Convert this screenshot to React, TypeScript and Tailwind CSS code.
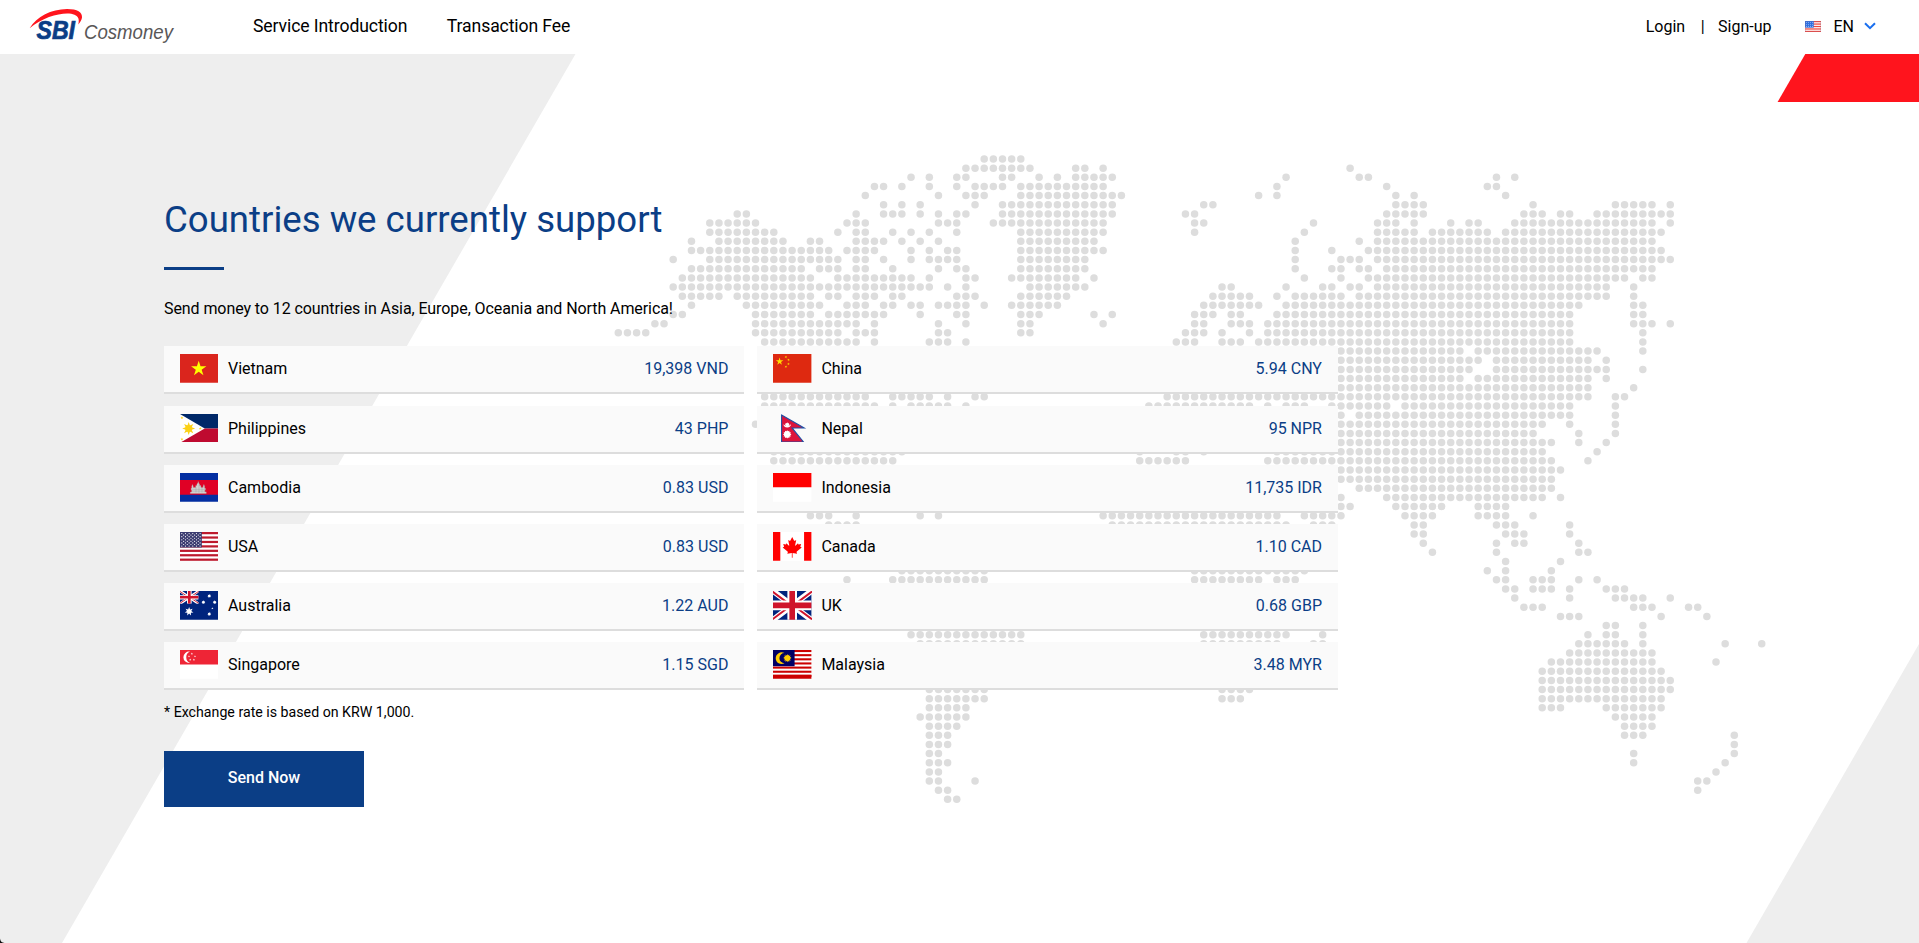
import type { ReactNode } from "react";

const COL = 9.1475;
const X0 = 618.3;
const Y0 = 159;

const MAP_ROWS: string[] = [
  "40-44",
  "38-45 50 51 53 80",
  "32 34 37 38 42 43 46 48 50-54 73 81 82 96 98",
  "28 29 31 34 37 39-42 44-53 72 84 95 96",
  "27 35 38-40 44-55 70 72 85 87 97",
  "29 31 33 39 42-54 64 65 85-88 100 109-113 115",
  "13 14 26 29-31 33 35 37 38 42-54 62 63 84-88 99-101 103 104 107-115",
  "10-15 25-27 35-37 41-53 63 64 76 83-85 87 91 93 94 98-113 115",
  "10-17 24 26 27 30 32 34 37 44-53 63 75 83-87 89-95 97-114",
  "8 11-18 21 22 26-29 31 33 35 44-52 74 81 83-113",
  "8-23 25-28 32 34 36 37 44-53 74 78 82-114",
  "6 10-24 26 27 29 32 34-37 44-51 74 79-81 83-115",
  "8-20 22-24 26 27 30 35 37 38 44-51 74 78 79 81 82 84-113",
  "7-21 24-32 34 38 39 43-50 52 75 79 82-110 112 113",
  "6-34 36 38 45-51 66 67 73 77 78 80 81 83-108 111",
  "7-11 13-21 23 24 26-28 30 31 37-39 44-49 65-69 72 74-79 81-108 111",
  "8 14-22 25-27 29 30 32 33 35-38 40 43-48 64-70 73-105 111 112",
  "6 7 15-21 23-29 33 37 38 44-46 52 54 63-65 67 68 72-104 111 112",
  "4 5 15-26 28 35 38 44 45 53 63 64 67-69 71-104 111-113 115",
  "0-3 15-24 26-28 35 36 44 45 62-64 66 69 71-104 112",
  "16-26 28 34-36 38 61-63 66-68 70-104 112",
  "79-92 94-107 112",
  "79-94 96-106 108",
  "79-93 96-108 112",
  "79-92 94-106 108",
  "79-106 111",
  "16-27 30-34 36 39 40 60-106 109 110",
  "16-28 30 32-36 38 58-69 71 73-75 78-84 86-104 109",
  "79 81-104 109",
  "15 79-101 104 109",
  "79-100 105 109",
  "79-102 105 108",
  "17-31 57 61 62 64 72-101 107",
  "17-30 57-62 71-102 106",
  "79-103",
  "79-102",
  "81-102",
  "79 84-101 103",
  "79 80 85-90 94-97",
  "21-23 26 33 35 53-72 75-79 86-89 94-97 100",
  "23-26 54-73 76-78 87 88 96-98 104",
  "87 88 97-99 104",
  "88 96 98 99 105",
  "89 96 105 106",
  "97 103",
  "31-40 63-75 95 97 102",
  "25 30-40 63-70 72-74 96 97 100-102 105 107",
  "97 98 100-102 104 108-110",
  "98 104 109-112 115",
  "99-101 111-113 117 118",
  "103-105 114 119",
  "108 109 112",
  "32-44 64-73 77 106 108 109 112",
  "33-44 64-72 76 77 105-110 112 121 125",
  "104-113",
  "102-113 120",
  "101-114",
  "101-115",
  "34-40 66-69 101-115",
  "34-40 66-68 101-114",
  "34-38 101-103 108-114",
  "33-38 109-113",
  "34-37 110-113",
  "34-36 110-112 122",
  "34-36 122",
  "34 35 111 122",
  "34-36 111 121",
  "34 35 120",
  "34 35 39 118 119",
  "35 36 118",
  "36 37",
];

const DOTS = MAP_ROWS.flatMap((row, r) =>
  row.split(" ").flatMap((part) => {
    const [from, to = from] = part.split("-").map(Number);
    return Array.from({ length: to - from + 1 }, (_, i) => ({
      key: `${r}-${from + i}`,
      cx: X0 + (from + i) * COL,
      cy: Y0 + r * COL,
    }));
  }),
);

function Backdrop() {
  return (
    <svg
      className="absolute left-0 top-0 h-[943px] w-[1919px]"
      viewBox="0 0 1919 943"
      aria-hidden="true"
    >
      <path d="M0 54H575.5L62 943H0Z" fill="#eeeeee" />
      <path d="M1919 644V943H1746.5Z" fill="#eeeeee" />
      <path d="M1805.3 54H1919V102H1777.6Z" fill="#ff141d" />
      <g fill="#dddddd">
        {DOTS.map((d) => (
          <circle key={d.key} cx={d.cx} cy={d.cy} r="3.75" />
        ))}
      </g>
      <path d="M0 938.5Q0.4 942.6 4.5 943H0Z" fill="#111111" />
    </svg>
  );
}

function starPoints(cx: number, cy: number, outer: number, tips = 5, ratio = 0.382, turn = 0) {
  return Array.from({ length: tips * 2 }, (_, i) => {
    const rad = i % 2 === 0 ? outer : outer * ratio;
    const a = (Math.PI * i) / tips - Math.PI / 2 + turn;
    return `${(cx + rad * Math.cos(a)).toFixed(2)},${(cy + rad * Math.sin(a)).toFixed(2)}`;
  }).join(" ");
}

function Star(props: { x: number; y: number; r: number; fill: string; tips?: number; ratio?: number; turn?: number }) {
  return (
    <polygon
      points={starPoints(props.x, props.y, props.r, props.tips, props.ratio, props.turn)}
      fill={props.fill}
    />
  );
}

function Flag({ children }: { children: ReactNode }) {
  return (
    <svg
      className="h-[28.8px] w-[38.4px] shrink-0"
      viewBox="0 0 640 480"
      preserveAspectRatio="none"
      aria-hidden="true"
    >
      {children}
    </svg>
  );
}

const vietnam = (
  <Flag>
    <path fill="#da251d" d="M0 0h640v480H0z" />
    <Star x={312} y={245} r={134} fill="#ffff00" />
  </Flag>
);

const china = (
  <Flag>
    <path fill="#de2910" d="M0 0h640v480H0z" />
    <Star x={110} y={124} r={66} fill="#ffde00" />
    <Star x={215} y={50} r={24} fill="#ffde00" turn={0.4} />
    <Star x={258} y={98} r={24} fill="#ffde00" turn={0.8} />
    <Star x={258} y={164} r={24} fill="#ffde00" />
    <Star x={215} y={212} r={24} fill="#ffde00" turn={0.4} />
  </Flag>
);

const philippines = (
  <Flag>
    <path fill="#002868" d="M0 0h640v240H0z" />
    <path fill="#bf0a30" d="M0 240h640v240H0z" />
    <path fill="#ffffff" d="M0 0 412 240 0 480z" />
    <Star x={145} y={243} r={108} fill="#fcd116" tips={8} ratio={0.5} />
    <circle cx="145" cy="243" r="55" fill="#fcd116" />
    <Star x={32} y={64} r={26} fill="#fcd116" />
    <Star x={32} y={420} r={26} fill="#fcd116" />
    <Star x={338} y={242} r={26} fill="#fcd116" />
  </Flag>
);

const nepal = (
  <Flag>
    <path
      d="M143 18 520 232H318L508 466H143Z"
      fill="#dc143c"
      stroke="#1f4fa5"
      strokeWidth="18"
    />
    <path d="M175 172a62 52 0 0 0 124 0q-24 26-62 26t-62-26z" fill="#ffffff" />
    <Star x={237} y={178} r={40} fill="#ffffff" tips={8} ratio={0.7} />
    <Star x={237} y={340} r={70} fill="#ffffff" tips={12} ratio={0.75} />
  </Flag>
);

const cambodia = (
  <Flag>
    <path fill="#032ea1" d="M0 0h640v480H0z" />
    <path fill="#e00025" d="M0 118h640v244H0z" />
    <path
      d="M172 342v-24h22v-40h-10v-24h12v-34l12-30 12 30v20h42v-30h20v-26l14-14 8-30 8 30 14 14v26h22v30h38v-20l12-30 12 30v34h14v24h-10v40h24v24z"
      fill="#d2d2d2"
      stroke="#a8a8a8"
      strokeWidth="5"
    />
    <path d="M200 302h240M205 272h230M266 235v90M366 235v90M316 190v140" stroke="#999999" strokeWidth="7" />
  </Flag>
);

const indonesia = (
  <Flag>
    <path fill="#ffffff" d="M0 0h640v480H0z" />
    <path fill="#ff0000" d="M0 0h640v236H0z" />
  </Flag>
);

const usa = (
  <Flag>
    <path fill="#ffffff" d="M0 0h640v480H0z" />
    {[0, 1, 2, 3, 4, 5, 6].map((i) => (
      <rect key={i} y={i * 73.85} width="640" height="36.92" fill="#bd1a2d" />
    ))}
    <path fill="#3a3b70" d="M0 0h364v258H0z" />
    {Array.from({ length: 9 }, (_, r) =>
      Array.from({ length: r % 2 ? 5 : 6 }, (_, c) => (
        <circle
          key={`${r}-${c}`}
          cx={30 + c * 61 + (r % 2 ? 30.5 : 0)}
          cy={26 + r * 26}
          r="10"
          fill="#ffffff"
        />
      )),
    )}
  </Flag>
);

const canada = (
  <Flag>
    <path fill="#ffffff" d="M0 0h640v480H0z" />
    <path fill="#ff0000" d="M0 0h122v480H0zM518 0h122v480H518z" />
    <path
      fill="#ff0000"
      d="M320 82 290 140q-5 8-15 4l-22-12 17 86q3 15-9 8l-38-40-7 22-45-8 14 46-24 12 82 68q6 6 3 14l-8 24 76-12v78h12v-78l76 12-8-24q-3-8 3-14l82-68-24-12 14-46-45 8-7-22-38 40q-12 7-9-8l17-86-22 12q-10 4-15-4z"
    />
  </Flag>
);

const unionJack = (
  <>
    <path fill="#00247d" d="M0 0h640v480H0z" />
    <path stroke="#ffffff" strokeWidth="96" d="M0 0 640 480M640 0 0 480" />
    <path stroke="#cf142b" strokeWidth="32" d="M-10 8 310 248M330 232 650 472M650 8 330 248M310 232-10 472" />
    <path stroke="#ffffff" strokeWidth="160" d="M320 0v480M0 240h640" />
    <path stroke="#cf142b" strokeWidth="94" d="M320 0v480M0 240h640" />
  </>
);

const uk = <Flag>{unionJack}</Flag>;

const australia = (
  <Flag>
    <path fill="#00247d" d="M0 0h640v480H0z" />
    <svg x="0" y="0" width="310" height="212" viewBox="0 0 640 480" preserveAspectRatio="none">
      {unionJack}
    </svg>
    <Star x={152} y={340} r={74} fill="#ffffff" tips={7} ratio={0.5} />
    <Star x={488} y={82} r={32} fill="#ffffff" tips={7} ratio={0.6} />
    <Star x={390} y={188} r={32} fill="#ffffff" tips={7} ratio={0.6} />
    <Star x={578} y={188} r={32} fill="#ffffff" tips={7} ratio={0.6} />
    <Star x={488} y={384} r={32} fill="#ffffff" tips={7} ratio={0.6} />
    <Star x={540} y={290} r={20} fill="#ffffff" />
  </Flag>
);

const singapore = (
  <Flag>
    <path fill="#ffffff" d="M0 0h640v480H0z" />
    <path fill="#ee2536" d="M0 0h640v240H0z" />
    <path fill="#ffffff" d="M166 26a96 96 0 1 0 0 190 104 104 0 0 1 0-190z" />
    <Star x={198} y={62} r={19} fill="#ffffff" />
    <Star x={150} y={104} r={19} fill="#ffffff" />
    <Star x={250} y={104} r={19} fill="#ffffff" />
    <Star x={170} y={162} r={19} fill="#ffffff" />
    <Star x={232} y={162} r={19} fill="#ffffff" />
  </Flag>
);

const malaysia = (
  <Flag>
    <path fill="#ffffff" d="M0 0h640v480H0z" />
    {[0, 1, 2, 3, 4, 5, 6].map((i) => (
      <rect key={i} y={i * 69} width="640" height="34.5" fill="#cc0000" />
    ))}
    <path fill="#cc0000" d="M0 414h640v66H0z" />
    <path fill="#000066" d="M0 0h360v270H0z" />
    <path fill="#ffcc00" d="M192 52a98 98 0 1 0 0 170 84 84 0 1 1 0-170z" />
    <Star x={240} y={136} r={70} fill="#ffcc00" tips={14} ratio={0.65} />
  </Flag>
);

type Country = { name: string; rate: string; flag: ReactNode };

const COUNTRIES: Country[] = [
  { name: "Vietnam", rate: "19,398 VND", flag: vietnam },
  { name: "China", rate: "5.94 CNY", flag: china },
  { name: "Philippines", rate: "43 PHP", flag: philippines },
  { name: "Nepal", rate: "95 NPR", flag: nepal },
  { name: "Cambodia", rate: "0.83 USD", flag: cambodia },
  { name: "Indonesia", rate: "11,735 IDR", flag: indonesia },
  { name: "USA", rate: "0.83 USD", flag: usa },
  { name: "Canada", rate: "1.10 CAD", flag: canada },
  { name: "Australia", rate: "1.22 AUD", flag: australia },
  { name: "UK", rate: "0.68 GBP", flag: uk },
  { name: "Singapore", rate: "1.15 SGD", flag: singapore },
  { name: "Malaysia", rate: "3.48 MYR", flag: malaysia },
];

function CountryRow({ name, rate, flag }: Country) {
  return (
    <li className="flex h-12 items-start border-b-2 border-[#dddddd] bg-[#fafafa] px-4 pt-2">
      {flag}
      <span className="ml-[9.6px] leading-[29px] text-black">{name}</span>
      <span className="ml-auto leading-[29px] text-[#0b3e86]">{rate}</span>
    </li>
  );
}

function Logo() {
  return (
    <svg className="ml-7 h-[54px] w-[150px]" viewBox="28 0 150 54" role="img" aria-label="SBI Cosmoney">
      <path
        d="M29.6 28.200C37 16.500 51 9 67 8.900C77.500 8.900 82.500 12.300 82 17.500C81.700 20 80.300 22 78.300 24.600C79.500 19.500 78.500 16.300 74.500 14.800C66 11.300 45 15.500 29.600 28.200Z"
        fill="#ff141d"
      />
      <text
        x="36.500"
        y="39"
        textLength="38.500"
        lengthAdjust="spacingAndGlyphs"
        fontFamily="Liberation Sans, sans-serif"
        fontWeight="700"
        fontStyle="italic"
        fontSize="25"
        fill="#0b3e86"
        stroke="#0b3e86"
        strokeWidth="0.7"
      >
        SBI
      </text>
      <text
        x="84"
        y="39"
        textLength="89"
        lengthAdjust="spacingAndGlyphs"
        fontFamily="Liberation Sans, sans-serif"
        fontStyle="italic"
        fontSize="19.500"
        fill="#595757"
      >
        Cosmoney
      </text>
    </svg>
  );
}

function Header() {
  return (
    <header className="relative flex h-[54px] items-center bg-white text-black">
      <Logo />
      <nav className="ml-[75px] flex gap-[39.500px] pb-0.5 text-[17.600px] leading-6 tracking-[-0.1px]">
        <a>Service Introduction</a>
        <a>Transaction Fee</a>
      </nav>
      <div className="ml-auto flex items-center pb-px pr-[43.500px] text-base leading-6">
        <a>Login</a>
        <span className="ml-[15.500px]">|</span>
        <a className="ml-[13.500px]">Sign-up</a>
        <svg className="ml-[33.500px] h-[11px] w-4" viewBox="0 0 640 480" preserveAspectRatio="none" aria-hidden="true">
          <path fill="#ffffff" d="M0 0h640v480H0z" />
          {[0, 1, 2, 3, 4].map((i) => (
            <rect key={i} y={i * 107} width="640" height="54" fill="#f0483e" />
          ))}
          <path fill="#2f6fe0" d="M0 0h350v290H0z" />
          {[60, 145, 230].map((y) =>
            [60, 140, 220, 300].map((x) => <circle key={`${x}-${y}`} cx={x} cy={y} r="18" fill="#ffffff" />),
          )}
          <path d="M10 10h620v460H10z" fill="none" stroke="#8a6a8a" strokeOpacity="0.5" strokeWidth="24" />
        </svg>
        <span className="ml-[12.500px]">EN</span>
        <svg className="mb-px ml-[9.500px] h-2 w-3" viewBox="0 0 12 8" aria-hidden="true">
          <path d="M1 1.200 6 6.200 11 1.200" fill="none" stroke="#1a6fef" strokeWidth="2" />
        </svg>
      </div>
    </header>
  );
}

export default function App() {
  return (
    <div className="relative h-[943px] w-[1919px] overflow-hidden bg-white font-['Roboto',sans-serif] text-base">
      <Backdrop />
      <Header />
      <main className="relative flex w-[1338px] flex-col items-start pl-[164px] pt-[142px]">
        <h1 className="text-[36.600px] leading-[48px] text-[#0b3e86]">Countries we currently support</h1>
        <div className="mt-[23px] h-[3px] w-[60px] bg-[#0b3e86]" />
        <p className="mt-[26.500px] leading-6 tracking-[-0.080px] text-black">
          Send money to 12 countries in Asia, Europe, Oceania and North America!
        </p>
        <ul className="mt-[25.850px] grid w-[1174px] grid-cols-[580.400px_580.600px] gap-x-[13px] gap-y-[11.200px]">
          {COUNTRIES.map((c) => (
            <CountryRow key={c.name} {...c} />
          ))}
        </ul>
        <p className="mt-[12px] text-[14.200px] leading-5 text-black">* Exchange rate is based on KRW 1,000.</p>
        <button className="mt-[28.650px] h-14 w-[200px] bg-[#0b3e86] pb-px font-medium text-white">Send Now</button>
      </main>
    </div>
  );
}
